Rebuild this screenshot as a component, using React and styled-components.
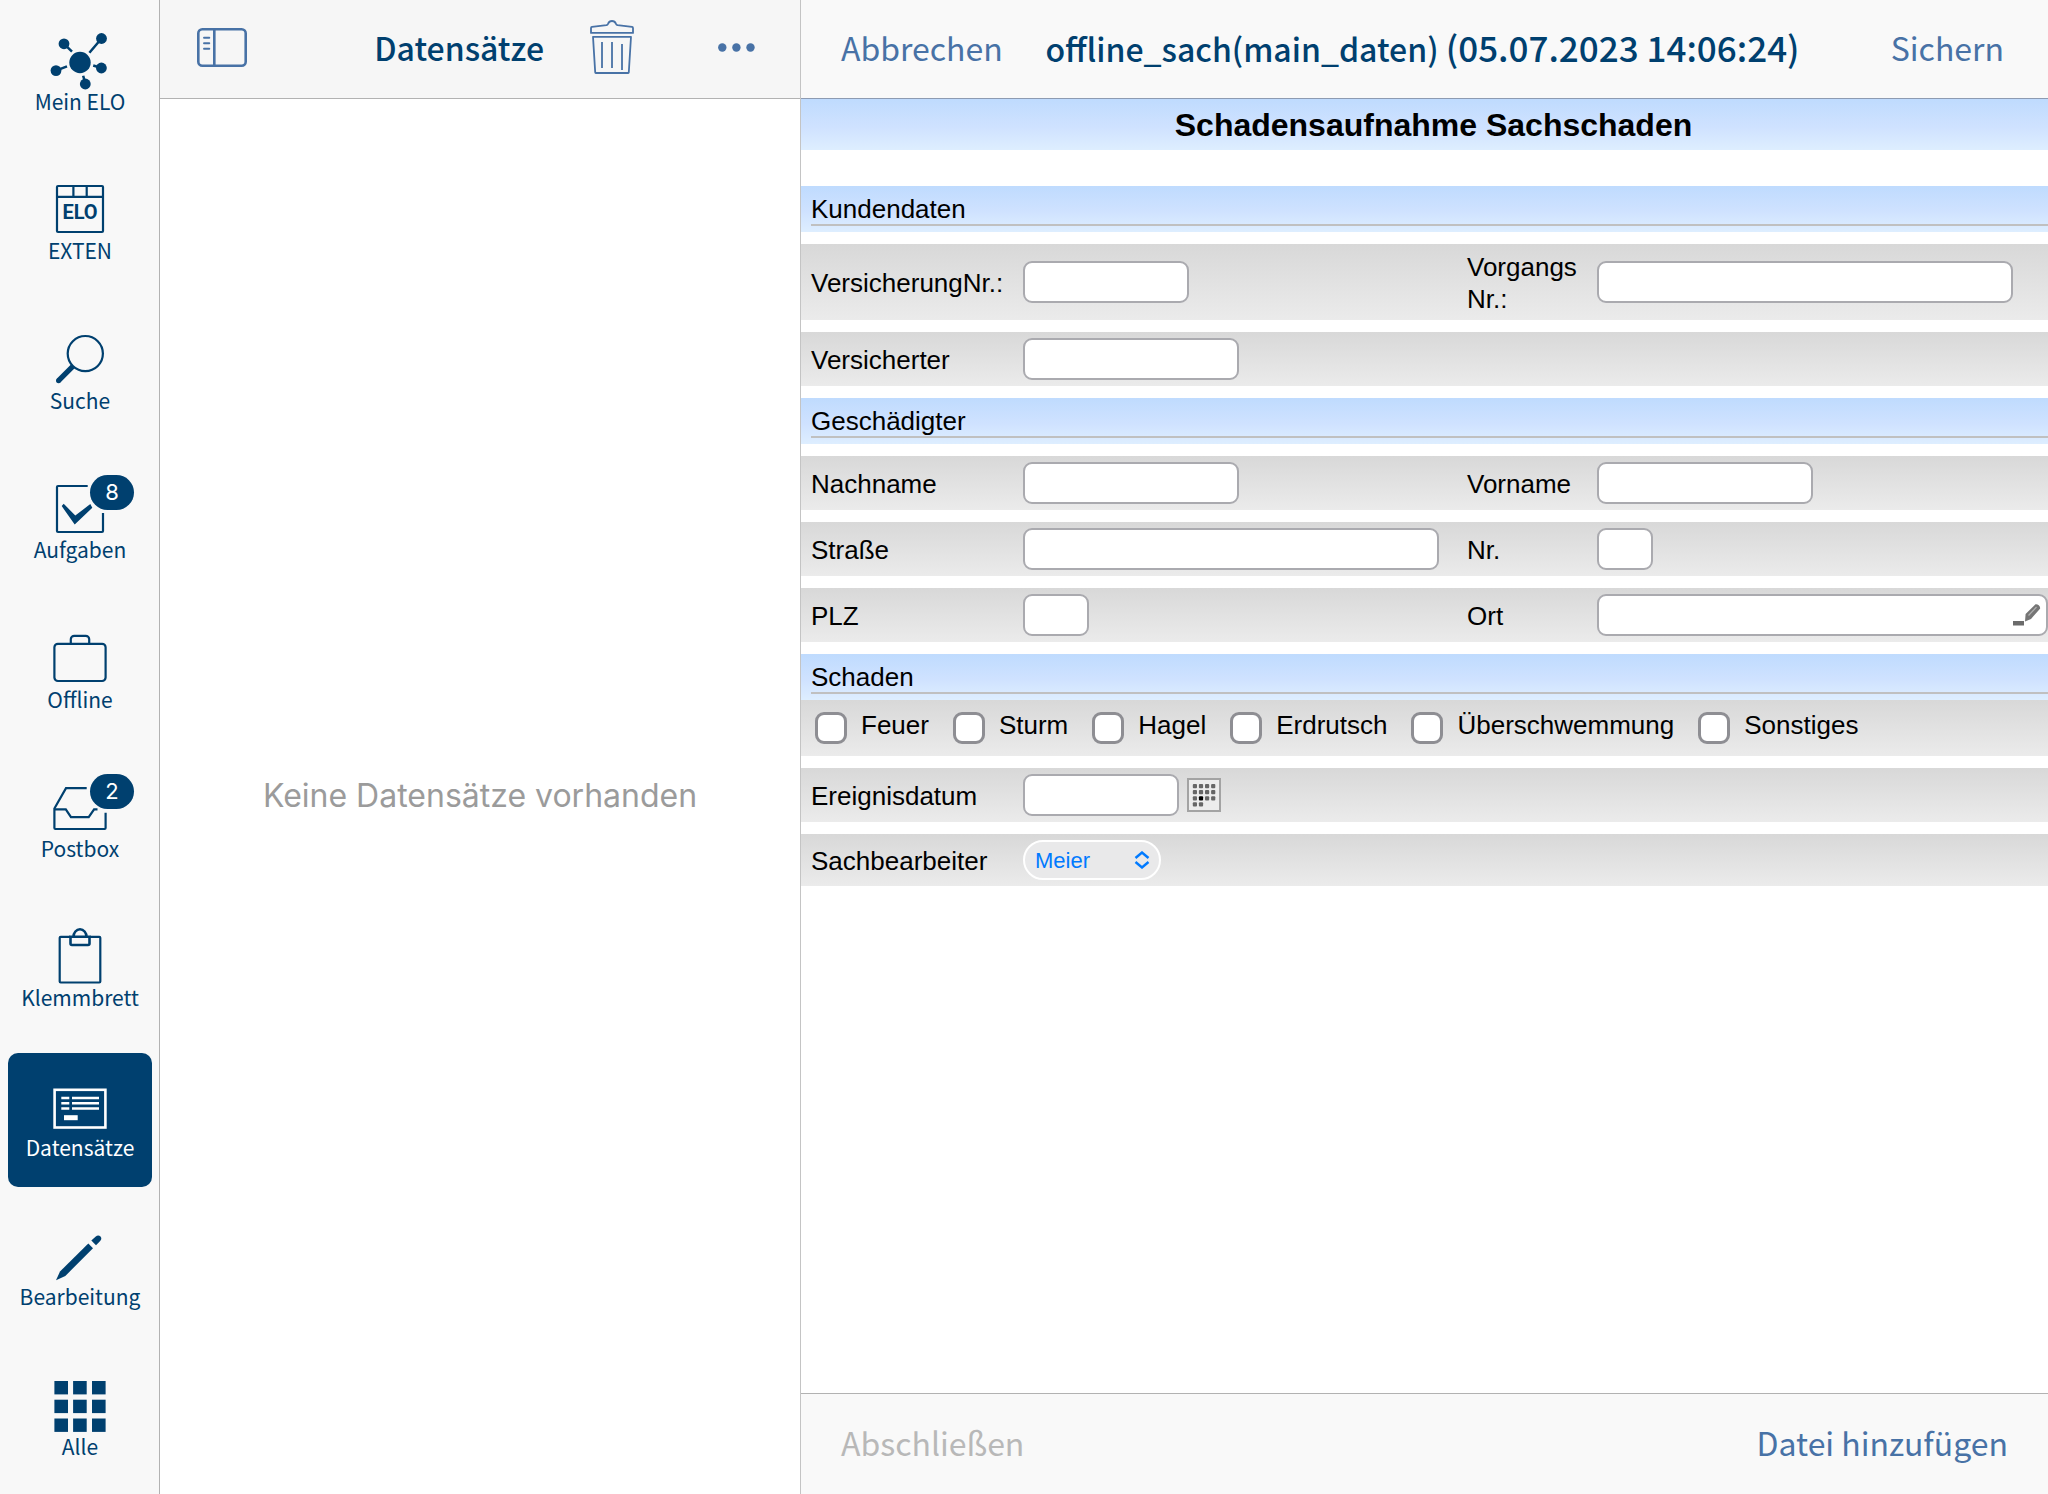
import React from "react";
import styled, { createGlobalStyle } from "styled-components";

const navy = "#00406f";
const link = "#4872a6";
const uiFont = `"Noto Sans CJK SC", "Noto Sans", sans-serif`;
const formFont = `"Liberation Sans", Arial, sans-serif`;

const GlobalStyle = createGlobalStyle`
  *, *::before, *::after { box-sizing: border-box; }
  body { margin: 0; background: #fff; font-family: ${uiFont}; }
  button, input, select { font: inherit; margin: 0; }
  button { padding: 0; border: 0; background: none; color: inherit; cursor: pointer; }
`;

const Page = styled.div`
  display: grid;
  grid-template-columns: 160px 641px minmax(0, 1fr);
  min-height: 100vh;
`;

/* ---------- sidebar ---------- */

const Sidebar = styled.nav`
  display: flex;
  background: #f8f8f8;
  border-right: 1px solid #b2b2b2;
`;

const NavList = styled.ul`
  display: flex;
  flex: 1;
  flex-direction: column;
  margin: 0;
  padding: 0;
  list-style: none;
`;

const NavItem = styled.li`
  display: flex;
  flex: 1;
  padding: 7px 7px 8px 8px;
`;

const NavButton = styled.button`
  display: flex;
  flex: 1;
  flex-direction: column;
  align-items: center;
  padding-top: 21px;
  border-radius: 10px;
  color: ${(p) => (p.$active ? "#fff" : navy)};
  background: ${(p) => (p.$active ? navy : "transparent")};
`;

const NavIcon = styled.span`
  position: relative;
  width: 64px;
  height: 60px;

  svg {
    display: block;
    overflow: visible;
  }
`;

const NavLabel = styled.span`
  font-size: 21px;
  line-height: 26px;
  white-space: nowrap;
`;

const Badge = styled.span`
  position: absolute;
  top: -1px;
  left: 42px;
  width: 44px;
  border-radius: 18px;
  background: ${navy};
  color: #fff;
  font-family: Inter, sans-serif;
  font-size: 22px;
  line-height: 35px;
  text-align: center;
`;

const Glyph = ({ children }) => (
  <svg width="64" height="60" viewBox="0 0 64 60" fill="none" stroke="currentColor" strokeWidth="2.2" aria-hidden="true">
    {children}
  </svg>
);

const HubIcon = () => (
  <Glyph>
    <g fill="currentColor" stroke="none">
      <circle cx="32" cy="34.5" r="10.7" />
      <circle cx="16" cy="15.8" r="5.4" />
      <circle cx="53.5" cy="10.5" r="5.4" />
      <circle cx="8" cy="42.6" r="5.4" />
      <circle cx="53.4" cy="40" r="5.4" />
      <circle cx="37.3" cy="56" r="5.4" />
    </g>
    <path d="M16 15.8l8 7.9M53.5 10.5L41.4 24.7M8 42.6l11-4.3M53.4 40l-8.2-2.5M37.3 56l-2.1-8.2" strokeWidth="2.5" />
  </Glyph>
);

const IconText = styled.text`
  font-family: Roboto, sans-serif;
  font-size: 20px;
  font-weight: 700;
  fill: currentColor;
  stroke: none;
`;

const ExtenIcon = () => (
  <Glyph>
    <rect x="9" y="9" width="46" height="46" rx="1" />
    <path d="M9 19.8h46M25.4 9v10.8M38.7 9v10.8" />
    <IconText x="32" y="42" textAnchor="middle">ELO</IconText>
  </Glyph>
);

const SearchIcon = () => (
  <Glyph>
    <circle cx="37.3" cy="26.6" r="17.6" />
    <path d="M24.8 39.4L10.8 53.4" strokeWidth="5.2" />
    <circle cx="10.6" cy="53.6" r="2.6" fill="currentColor" stroke="none" />
  </Glyph>
);

const TasksIcon = () => (
  <Glyph>
    <path d="M39.7 10H10a1 1 0 0 0-1 1v44a1 1 0 0 0 1 1h44a1 1 0 0 0 1-1V37" />
    <path d="M15.7 27.8l-2 2.3 13 18.4 17.6-16.7-2-3.7-15 11.4z" fill="currentColor" stroke="none" />
  </Glyph>
);

const CaseIcon = () => (
  <Glyph>
    <rect x="6.4" y="17.8" width="51.2" height="37.2" rx="3.5" />
    <path d="M22.8 17.8v-4.5a3.5 3.5 0 0 1 3.5-3.5h11.4a3.5 3.5 0 0 1 3.5 3.5v4.5" />
  </Glyph>
);

const TrayIcon = () => (
  <Glyph>
    <path d="M38.7 13.2H18L6.4 33.5V53a1 1 0 0 0 1 1h49.2a1 1 0 0 0 1-1V37.7" />
    <path d="M6.4 34.3h11.4l5.2 7.9h17.7l5.4-7.9h3.4" />
  </Glyph>
);

const ClipboardIcon = () => (
  <Glyph>
    <path d="M22 12.8H12.7a1 1 0 0 0-1 1V57.5a1 1 0 0 0 1 1h38.6a1 1 0 0 0 1-1V13.8a1 1 0 0 0-1-1H42" />
    <path d="M22.5 12.8h19v6.7a1.5 1.5 0 0 1-1.5 1.5H24a1.5 1.5 0 0 1-1.5-1.5zM25.5 12.8a6.5 7.5 0 0 1 13 0" strokeWidth="2.6" />
  </Glyph>
);

const RecordIcon = () => (
  <Glyph>
    <rect x="6.6" y="15.8" width="50.8" height="37.7" strokeWidth="2.6" />
    <path d="M13.3 23.9h8M24 23.9h27M13.3 29.2h8M24 29.2h27M13.3 34.5h8M24 34.5h27" strokeWidth="2.5" />
    <path d="M16 43.7h13.7" strokeWidth="5" />
  </Glyph>
);

const PencilIcon = () => (
  <Glyph>
    <g fill="currentColor" stroke="none">
      <path d="M8 57.3L12 48.5 40.3 20.6 45 25.2 17.3 53z" />
      <path d="M43.3 17.6l4.2-3.8c1.7-1.5 3.6-1.6 4.9-.4 1.3 1.3 1.2 3-.2 4.5l-4.2 4.3z" />
    </g>
  </Glyph>
);

const GridIcon = () => (
  <Glyph>
    <g fill="currentColor" stroke="none">
      {[8, 26.7, 45.5].flatMap((y) =>
        [6.4, 25.1, 44].map((x) => <rect key={`${x}-${y}`} x={x} y={y} width="13.6" height="13.4" />)
      )}
    </g>
  </Glyph>
);

const navItems = [
  { label: "Mein ELO", icon: HubIcon },
  { label: "EXTEN", icon: ExtenIcon },
  { label: "Suche", icon: SearchIcon },
  { label: "Aufgaben", icon: TasksIcon, count: 8 },
  { label: "Offline", icon: CaseIcon },
  { label: "Postbox", icon: TrayIcon, count: 2 },
  { label: "Klemmbrett", icon: ClipboardIcon },
  { label: "Datensätze", icon: RecordIcon, active: true },
  { label: "Bearbeitung", icon: PencilIcon },
  { label: "Alle", icon: GridIcon },
];

/* ---------- bars ---------- */

const Bar = styled.header`
  height: 99px;
  padding: 0 44px 4px 40px;
  background: ${(p) => p.$bg || "#f9f9f9"};
  border-bottom: 1px solid ${(p) => p.$line || "#b2b2b2"};
  color: ${link};
  font-size: 32px;
  line-height: 48px;
`;

const ListBar = styled(Bar)`
  display: flex;
  align-items: center;
  padding-left: 37px;
  padding-right: 45px;
`;

const EditorBar = styled(Bar)`
  display: grid;
  grid-template-columns: 1fr auto 1fr;
  align-items: center;
`;

const FooterBar = styled(Bar).attrs({ as: "footer" })`
  display: flex;
  align-items: center;
  justify-content: space-between;
  height: 101px;
  padding-right: 40px;
  border-bottom: 0;
  border-top: 1px solid #b2b2b2;
`;

const BarTitle = styled.h1`
  margin: 0;
  color: ${navy};
  font-size: 32px;
  font-weight: 500;
  white-space: nowrap;
`;

const Timestamp = styled.span`
  font-size: 35px;
`;

const ListTitle = styled(BarTitle).attrs({ as: "h2" })`
  margin: 0 46px 0 auto;
`;

const TextButton = styled.button`
  justify-self: ${(p) => (p.$end ? "end" : "start")};

  &:disabled {
    color: #b8b8b8;
  }
`;

const IconButton = styled.button`
  display: flex;
`;

const TrashButton = styled(IconButton)`
  margin-right: 84px;
`;

/* ---------- record list ---------- */

const ListPane = styled.section`
  display: flex;
  flex-direction: column;
  border-right: 1px solid #c4c4c4;
`;

const Empty = styled.p`
  display: grid;
  flex: 1;
  place-items: center;
  margin: 0;
  padding-bottom: 2px;
  color: #9b9b9b;
  font-family: Inter, Roboto, sans-serif;
  font-size: 32px;
`;

/* ---------- form ---------- */

const EditorPane = styled.main`
  display: flex;
  flex-direction: column;
  min-width: 0;
`;

const Form = styled.form`
  flex: 1;
  color: #000;
  font-family: ${formFont};
  font-size: 26px;
  line-height: 32px;
`;

const blueBand = "linear-gradient(#bfdbfe, #cfe2ff 55%, #deeeff)";
const greyBand = "linear-gradient(#d8d8d8, #ebebeb)";

const FormTitle = styled.h2`
  margin: 0 0 36px;
  padding: 1px 0 0 18px;
  background: ${blueBand};
  font-size: 32px;
  line-height: 50px;
  text-align: center;
`;

const Section = styled.h3`
  margin: 0 0 ${(p) => (p.$flush ? 0 : 12)}px;
  padding: 8px 0 6px 10px;
  background: ${blueBand};
  font-size: 26px;
  font-weight: 400;
  line-height: 30px;

  span {
    display: block;
    border-bottom: 2px solid #c0c0c0;
  }
`;

const Row = styled.div`
  display: grid;
  grid-template-columns: 212px 444px 130px minmax(0, 1fr);
  align-items: center;
  min-height: ${(p) => p.$height || 54}px;
  margin-bottom: 12px;
  padding: 5px 0 5px 10px;
  background: ${greyBand};
`;

const FieldLabel = styled.label`
  padding: 2px 16px 0 0;
`;

const fieldWidths = { xs: "56px", s: "66px", date: "156px", m: "166px", l: "216px", xl: "416px", full: "100%" };

const TextInput = styled.input`
  width: ${(p) => fieldWidths[p.$size]};
  height: 42px;
  padding: 0 8px;
  border: 2px solid #aaaaaf;
  border-radius: 9px;
  background: #fff;
`;

const InputGroup = styled.div`
  position: relative;
  display: flex;
  align-items: center;
  gap: 8px;
`;

const PenMark = styled.svg`
  position: absolute;
  right: 6px;
  top: 9px;
`;

const CheckRow = styled.div`
  display: flex;
  align-items: flex-start;
  gap: 24px;
  min-height: 56px;
  margin-bottom: 12px;
  padding: 9px 14px 0;
  background: ${greyBand};
`;

const CheckLabel = styled.label`
  display: flex;
  gap: 14px;
`;

const CheckBox = styled.input.attrs({ type: "checkbox" })`
  appearance: none;
  width: 32px;
  height: 32px;
  margin-top: 3px;
  border: 3px solid #8e8e93;
  border-radius: 9px;
  background: #fff;

  &:checked {
    background: #007aff;
  }
`;

const SelectWrap = styled.div`
  position: relative;
  width: 138px;

  svg {
    position: absolute;
    right: 11px;
    top: 11px;
    pointer-events: none;
  }
`;

const Select = styled.select`
  display: block;
  appearance: none;
  width: 100%;
  height: 40px;
  padding: 1px 36px 0 10px;
  border: 2px solid #fff;
  border-radius: 20px;
  background: #e9e9ea;
  color: #007aff;
  font-size: 22px;
`;

const Field = ({ id, label, size }) => (
  <>
    <FieldLabel htmlFor={id}>{label}</FieldLabel>
    <TextInput id={id} type="text" $size={size} />
  </>
);

const ToggleIcon = () => (
  <svg width="50" height="39" viewBox="0 0 50 39" fill="none" stroke={link} strokeWidth="2.6" aria-hidden="true">
    <rect x="1.3" y="1.3" width="47.4" height="36.4" rx="4" />
    <path d="M17.3 1.3v36.4" />
    <path d="M7 9.7h5.3M7 15.2h5.3M7 20.8h5.3" strokeWidth="1.9" strokeLinecap="round" />
  </svg>
);

const TrashIcon = () => (
  <svg width="44" height="54" viewBox="0 0 44 54" fill="none" stroke={link} strokeWidth="1.8" strokeLinejoin="round" aria-hidden="true">
    <path d="M1 12.9V8a1.200 1.200 0 0 1 1-1.100L16.500 5.200c1-.2 1.200-.7 1.600-1.500 1.500-3.600 6.300-3.600 7.800 0 .4.8.6 1.300 1.600 1.500L42 6.900A1.200 1.200 0 0 1 43 8v4.900z" />
    <path d="M3 16.800h38l-2.200 35.400a1 1 0 0 1-1 .8H6.200a1 1 0 0 1-1-.8z" />
    <path d="M12 22v26M22 22v26M32 24v26" />
  </svg>
);

const MoreIcon = () => (
  <svg width="37" height="9" viewBox="0 0 37 9" fill={link} aria-hidden="true">
    <circle cx="4.3" cy="4.5" r="4.2" />
    <circle cx="18.4" cy="4.5" r="4.2" />
    <circle cx="32.5" cy="4.5" r="4.2" />
  </svg>
);

const calendarDots = [4, 4, 4, 2].flatMap((n, row) => Array.from({ length: n }, (_, col) => [col, row]));

const CalendarIcon = () => (
  <svg width="34" height="34" viewBox="0 0 34 34" aria-hidden="true">
    <rect x="1" y="1" width="32" height="32" fill="#ececec" stroke="#a3a3a3" strokeWidth="2" />
    {calendarDots.map(([col, row]) => (
      <rect
        key={`${col}-${row}`}
        x={5.8 + col * 6.1}
        y={6 + row * 6.1}
        width="4.2"
        height="4.2"
        rx="1"
        fill={col === 1 && row === 2 ? "#000" : "#666"}
      />
    ))}
  </svg>
);

const damageKinds = ["Feuer", "Sturm", "Hagel", "Erdrutsch", "Überschwemmung", "Sonstiges"];

export default function App() {
  return (
    <>
      <GlobalStyle />
      <Page>
        <Sidebar>
          <NavList>
            {navItems.map(({ label, icon: Icon, count, active }) => (
              <NavItem key={label}>
                <NavButton type="button" $active={active} aria-current={active ? "page" : undefined}>
                  <NavIcon>
                    <Icon />
                    {count && <Badge>{count}</Badge>}
                  </NavIcon>
                  <NavLabel>{label}</NavLabel>
                </NavButton>
              </NavItem>
            ))}
          </NavList>
        </Sidebar>

        <ListPane>
          <ListBar $bg="#f6f6f6">
            <IconButton type="button" aria-label="Seitenleiste">
              <ToggleIcon />
            </IconButton>
            <ListTitle>Datensätze</ListTitle>
            <TrashButton type="button" aria-label="Löschen">
              <TrashIcon />
            </TrashButton>
            <IconButton type="button" aria-label="Mehr">
              <MoreIcon />
            </IconButton>
          </ListBar>
          <Empty>Keine Datensätze vorhanden</Empty>
        </ListPane>

        <EditorPane>
          <EditorBar $line="#8d9bb2">
            <TextButton type="button">Abbrechen</TextButton>
            <BarTitle>
              offline_sach(main_daten) <Timestamp>(05.07.2023 14:06:24)</Timestamp>
            </BarTitle>
            <TextButton type="button" $end>Sichern</TextButton>
          </EditorBar>

          <Form onSubmit={(e) => e.preventDefault()}>
            <FormTitle>Schadensaufnahme Sachschaden</FormTitle>

            <Section><span>Kundendaten</span></Section>
            <Row $height={76}>
              <Field id="versicherungnr" label="VersicherungNr.:" size="m" />
              <Field id="vorgangsnr" label="Vorgangs Nr.:" size="xl" />
            </Row>
            <Row>
              <Field id="versicherter" label="Versicherter" size="l" />
            </Row>

            <Section><span>Geschädigter</span></Section>
            <Row>
              <Field id="nachname" label="Nachname" size="l" />
              <Field id="vorname" label="Vorname" size="l" />
            </Row>
            <Row>
              <Field id="strasse" label="Straße" size="xl" />
              <Field id="hausnr" label="Nr." size="xs" />
            </Row>
            <Row>
              <Field id="plz" label="PLZ" size="s" />
              <FieldLabel htmlFor="ort">Ort</FieldLabel>
              <InputGroup>
                <TextInput id="ort" type="text" $size="full" />
                <PenMark width="30" height="24" viewBox="0 0 30 24" aria-hidden="true">
                  <rect x="1" y="18" width="11" height="4.5" fill="#6b6b6b" />
                  <path d="M13 18.5l.6-7.500L23 1.800c1.500-1.500 6 1.200 5 4L19 16z" fill="#757575" />
                  <path d="M16.500 12.500l8-8.500" stroke="#b0b0b0" strokeWidth="1.2" />
                </PenMark>
              </InputGroup>
            </Row>

            <Section $flush><span>Schaden</span></Section>
            <CheckRow>
              {damageKinds.map((kind) => (
                <CheckLabel key={kind}>
                  <CheckBox name={kind} />
                  {kind}
                </CheckLabel>
              ))}
            </CheckRow>
            <Row>
              <FieldLabel htmlFor="ereignisdatum">Ereignisdatum</FieldLabel>
              <InputGroup>
                <TextInput id="ereignisdatum" type="text" $size="date" />
                <IconButton type="button" aria-label="Kalender">
                  <CalendarIcon />
                </IconButton>
              </InputGroup>
            </Row>
            <Row $height={52}>
              <FieldLabel htmlFor="sachbearbeiter">Sachbearbeiter</FieldLabel>
              <SelectWrap>
                <Select id="sachbearbeiter" defaultValue="Meier">
                  <option>Meier</option>
                </Select>
                <svg width="16" height="18" viewBox="0 0 16 18" fill="none" stroke="#007aff" strokeWidth="2.4" aria-hidden="true">
                  <path d="M1.500 7L8 1.500 14.500 7M1.500 11L8 16.500 14.500 11" />
                </svg>
              </SelectWrap>
            </Row>
          </Form>

          <FooterBar>
            <TextButton type="button" disabled>Abschließen</TextButton>
            <TextButton type="button" $end>Datei hinzufügen</TextButton>
          </FooterBar>
        </EditorPane>
      </Page>
    </>
  );
}
